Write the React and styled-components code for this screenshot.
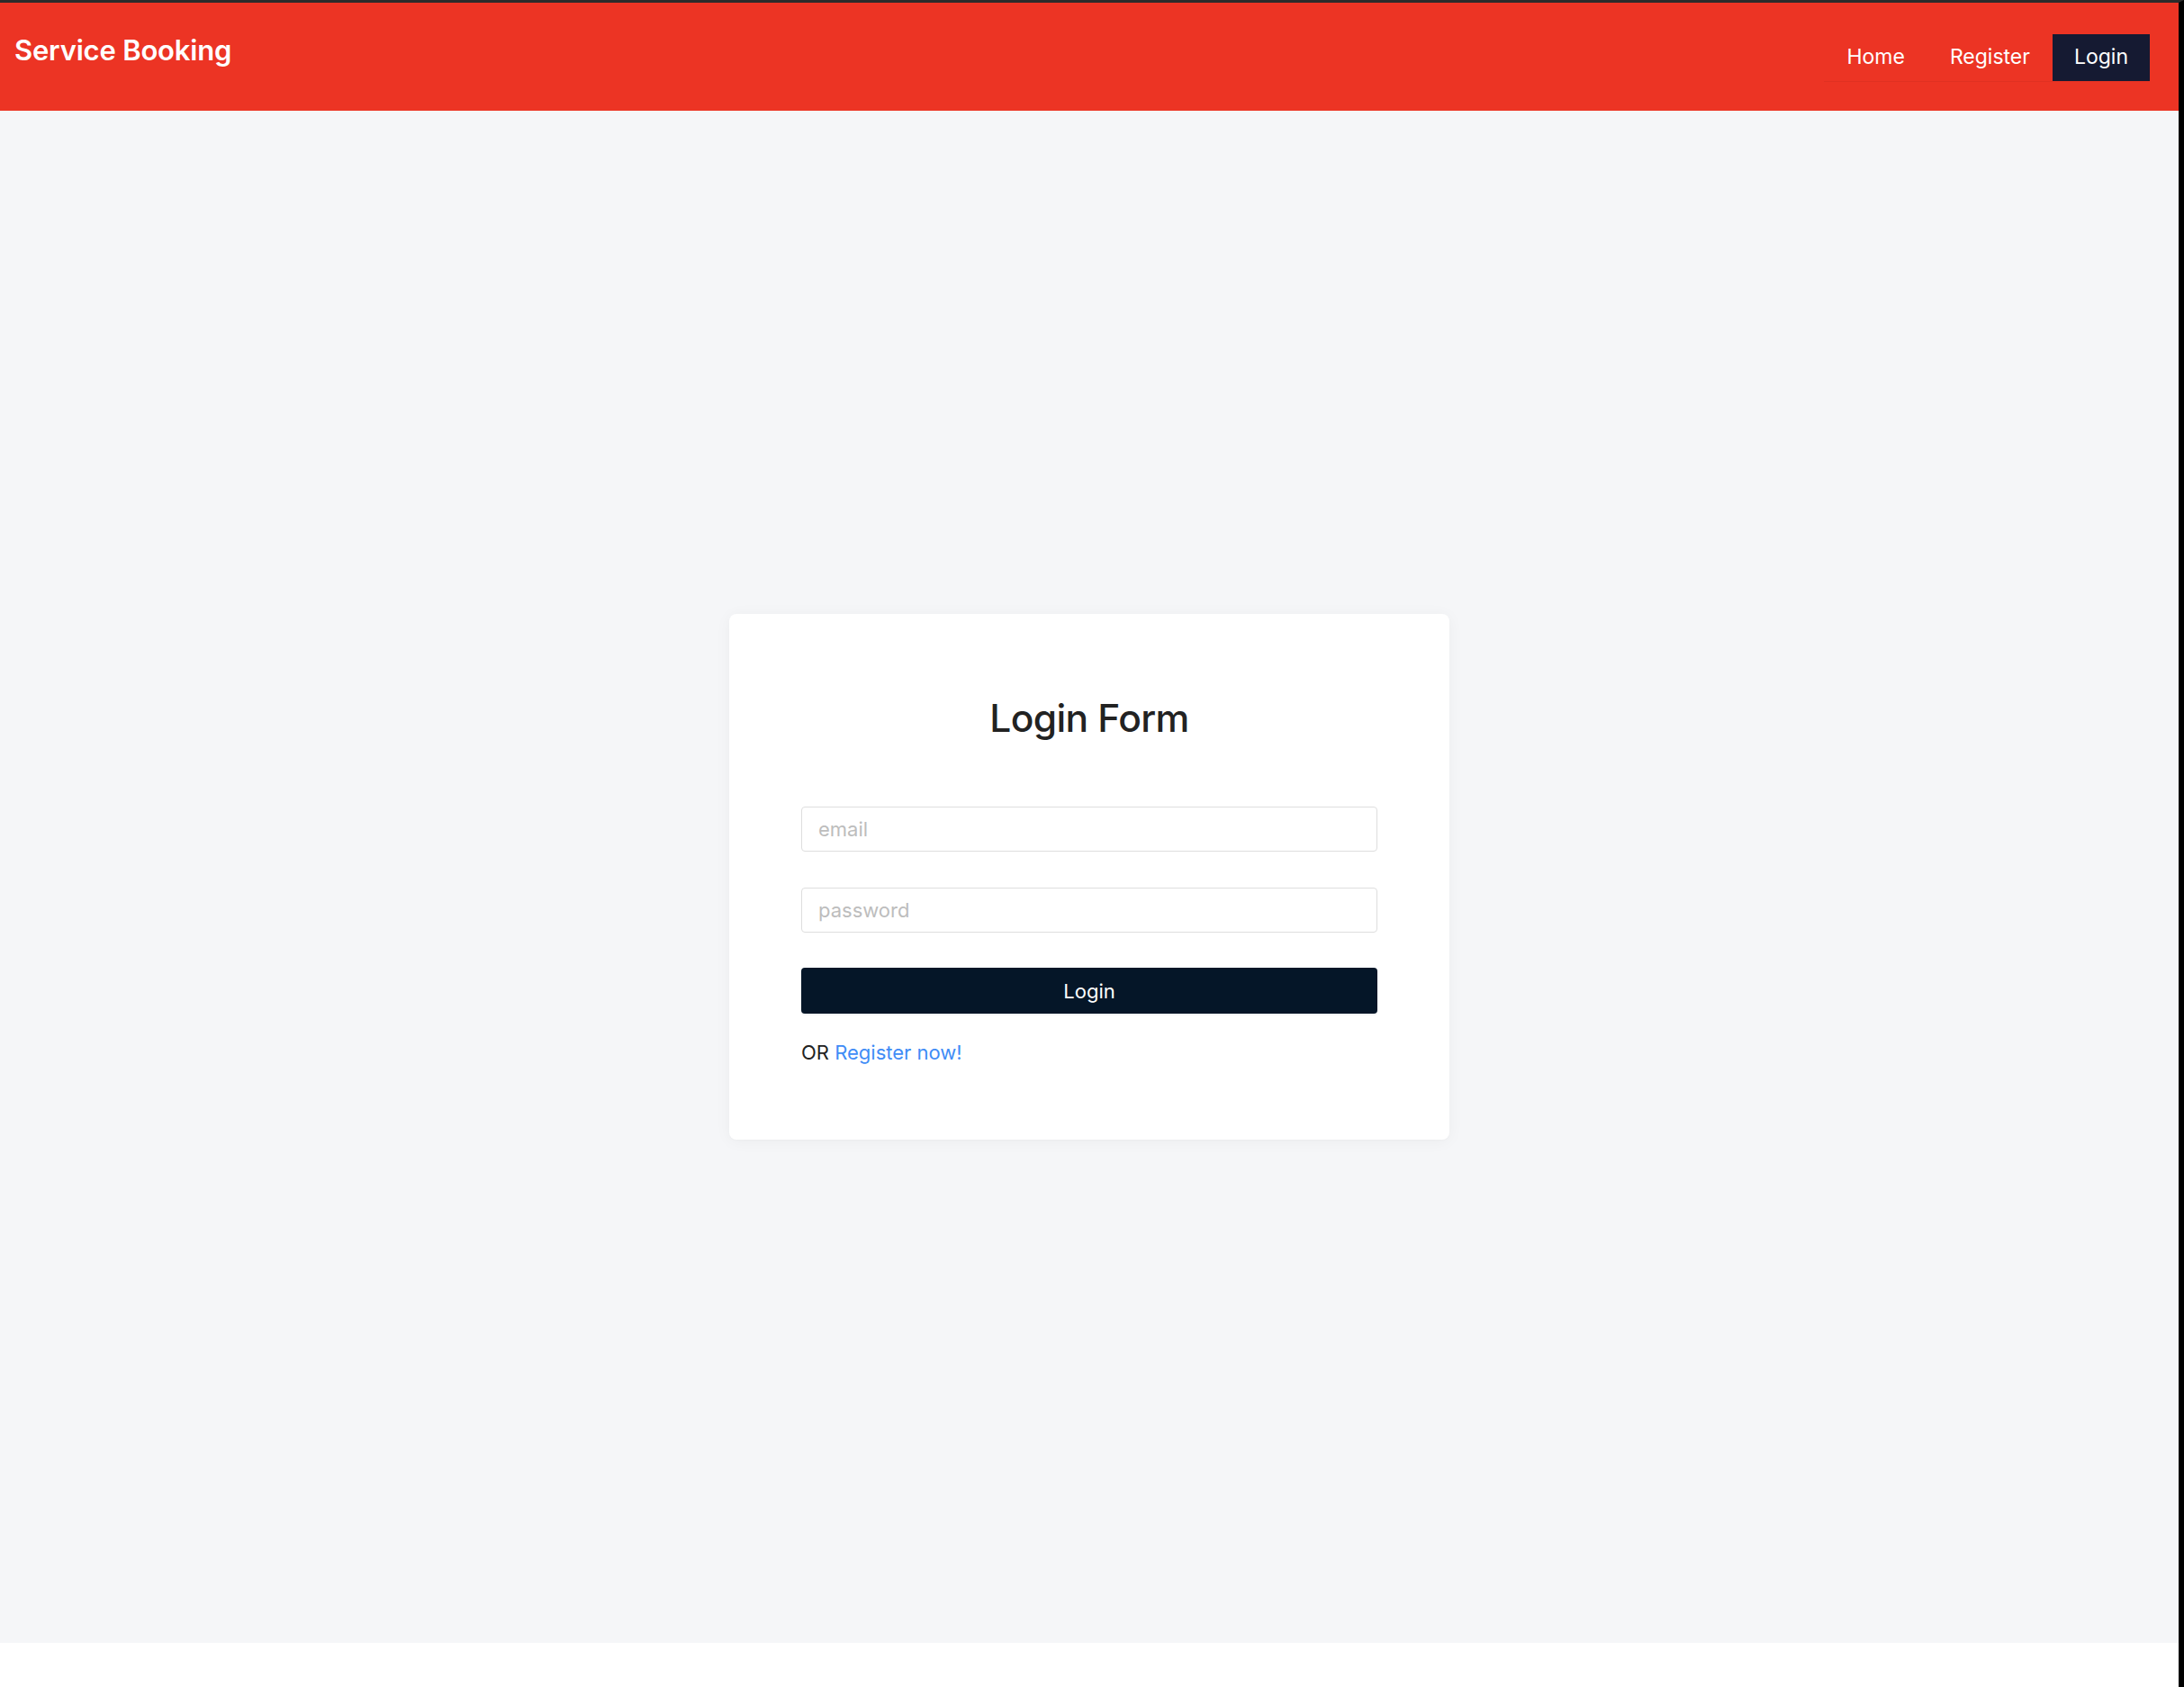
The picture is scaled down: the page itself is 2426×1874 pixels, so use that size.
import React from "react";
import styled, { createGlobalStyle } from "styled-components";

const Global = createGlobalStyle`
  html, body { margin: 0; padding: 0; background: #ffffff; }
  body { font-family: Inter, "Noto Sans", "Liberation Sans", sans-serif; }
  * { box-sizing: border-box; }
`;

const Frame = styled.div`
  min-height: 1874px;
  border-top: 3px solid #2b2b2b;
  border-right: 6px solid #000;
  background: #fff;
  display: flex;
  flex-direction: column;
`;

const Header = styled.header`
  height: 120px;
  background: #ec3424;
  display: flex;
  justify-content: space-between;
  align-items: flex-start;
  padding: 0 32px 0 16px;
`;

const Brand = styled.div`
  color: #fff;
  font-size: 31px;
  font-weight: 600;
  line-height: 1;
  margin-top: 37px;
  letter-spacing: -0.2px;
`;

const Menu = styled.nav`
  display: flex;
  margin-top: 35px;
  border-bottom: 1px solid rgba(0, 0, 0, 0.05);
`;

const MenuItem = styled.a`
  display: flex;
  align-items: center;
  height: 52px;
  padding: 0 ${(p) => (p.$active ? 24 : 25)}px 3px;
  font-size: 23px;
  color: #fff;
  text-decoration: none;
  background: ${(p) => (p.$active ? "#151a32" : "transparent")};
  margin-bottom: ${(p) => (p.$active ? "-1px" : "0")};
`;

const Main = styled.main`
  height: 1702px;
  background: #f5f6f8;
  display: flex;
  align-items: center;
  justify-content: center;
`;

const Card = styled.div`
  width: 800px;
  background: #fff;
  border-radius: 8px;
  box-shadow: 0 2px 18px rgba(0, 0, 0, 0.045), 0 1px 3px rgba(0, 0, 0, 0.02);
  padding: 89px 80px 80px;
`;

const Title = styled.h1`
  margin: 0 0 72px;
  font-size: 42.5px;
  font-weight: 500;
  line-height: 53px;
  color: #222;
  text-align: center;
  letter-spacing: -0.6px;
`;

const Form = styled.form`
  display: flex;
  flex-direction: column;
`;

const Input = styled.input`
  height: 50px;
  width: 100%;
  border: 1px solid #dedede;
  border-radius: 4px;
  padding: 0 18px;
  font-family: inherit;
  font-size: 22px;
  color: #222;
  background: #fff;
  outline: none;
  margin-bottom: ${(p) => p.$gap}px;
  &::placeholder { color: #bdbdbd; }
`;

const Submit = styled.button`
  height: 51px;
  width: 100%;
  border: none;
  border-radius: 4px;
  background: #051628;
  color: #fff;
  font-family: inherit;
  font-size: 22px;
  box-shadow: 0 2px 0 rgba(0, 0, 0, 0.04);
  cursor: pointer;
`;

const Alt = styled.div`
  margin-top: 27px;
  font-size: 22px;
  line-height: 33px;
  color: #222;
`;

const Link = styled.a`
  color: #3f8cf6;
  text-decoration: none;
`;

export default function App() {
  return (
    <>
      <Global />
      <Frame>
        <Header>
          <Brand>Service Booking</Brand>
          <Menu>
            <MenuItem href="#">Home</MenuItem>
            <MenuItem href="#">Register</MenuItem>
            <MenuItem href="#" $active>Login</MenuItem>
          </Menu>
        </Header>
        <Main>
          <Card>
            <Title>Login Form</Title>
            <Form onSubmit={(e) => e.preventDefault()}>
              <Input type="email" placeholder="email" $gap={40} />
              <Input type="password" placeholder="password" $gap={39} />
              <Submit type="submit">Login</Submit>
            </Form>
            <Alt>
              OR <Link href="#">Register now!</Link>
            </Alt>
          </Card>
        </Main>
      </Frame>
    </>
  );
}
